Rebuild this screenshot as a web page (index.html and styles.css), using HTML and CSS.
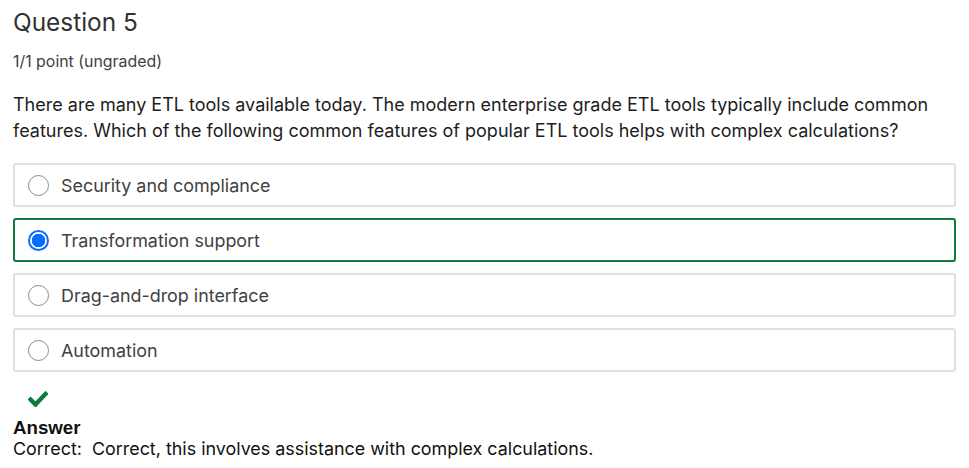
FILE: index.html
```html
<!DOCTYPE html>
<html>
<head>
<meta charset="utf-8">
<link rel="stylesheet" href="styles.css">
</head>
<body>
<div class="problem">
  <h3 class="title">Question 5</h3>
  <div class="points">1/1 point (ungraded)</div>
  <p class="question">There are many ETL tools available today. The modern enterprise grade ETL tools typically include common features. Which of the following common features of popular ETL tools helps with complex calculations?</p>
  <div class="choices">
    <label class="choice"><span class="radio"></span><span>Security and compliance</span></label>
    <label class="choice selected"><span class="radio checked"></span><span>Transformation support</span></label>
    <label class="choice"><span class="radio"></span><span>Drag-and-drop interface</span></label>
    <label class="choice"><span class="radio"></span><span>Automation</span></label>
  </div>
  <div class="status">
    <svg class="check" width="20" height="16" viewBox="0 0 20 16"><path d="M2.5 8.5 L7.5 13.5 L17.5 3" fill="none" stroke="#0d7a3f" stroke-width="4.4" stroke-linecap="square"/></svg>
  </div>
  <div class="answer">
    <div class="answer-label">Answer</div>
    <div class="answer-text">Correct:&nbsp; Correct, this involves assistance with complex calculations.</div>
  </div>
</div>
</body>
</html>
```
FILE: styles.css
```css
html, body {
  margin: 0;
  padding: 0;
  background: #fff;
}
body {
  font-family: Inter, "Open Sans", sans-serif;
  color: #313131;
}
.problem {
  padding: 6px 13px 0 13px;
}
.title {
  margin: 0;
  font-size: 24.4px;
  font-weight: 400;
  line-height: 32px;
  color: #313131;
}
.points {
  margin-top: 14px;
  font-size: 15.9px;
  line-height: 20px;
  color: #414141;
}
.question {
  margin: 20px 0 0 0;
  font-size: 18px;
  line-height: 26px;
  color: #1d1d1d;
}
.choices {
  margin-top: 19px;
  display: flex;
  flex-direction: column;
  gap: 11px;
}
.choice {
  display: flex;
  align-items: center;
  gap: 12px;
  height: 40px;
  padding: 0 13px;
  border: 2px solid #e0e0e0;
  border-radius: 3px;
  font-size: 17.9px;
  color: #414141;
}
.choice.selected {
  border-color: #0d7a3f;
}
.radio {
  width: 19px;
  height: 19px;
  border: 1px solid #8a8a8a;
  border-radius: 50%;
  box-sizing: content-box;
  flex: none;
}
.radio.checked {
  border: 2px solid #0a6cff;
  width: 17px;
  height: 17px;
  background: radial-gradient(circle, #0a6cff 0 6.5px, #fff 7px);
}
.status {
  height: 35px;
  padding-left: 15px;
  display: flex;
  align-items: flex-end;
}
.check {
  display: block;
}
.answer {
  margin-top: 11px;
}
.answer-label {
  font-family: "Liberation Sans", Arial, sans-serif;
  font-weight: 700;
  font-size: 18.7px;
  line-height: 20px;
  color: #111;
}
.answer-text {
  font-size: 17.9px;
  line-height: 22px;
  color: #111;
}
```
